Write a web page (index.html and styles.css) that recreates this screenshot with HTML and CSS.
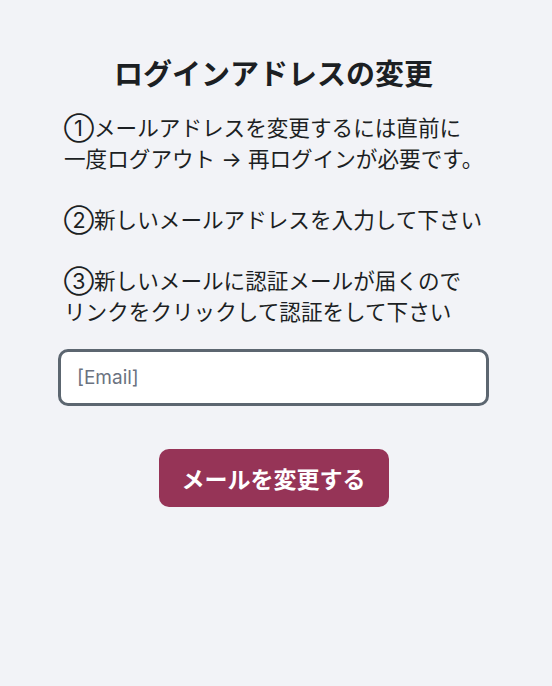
FILE: index.html
```html
<!DOCTYPE html>
<html lang="ja">
<head>
  <meta charset="UTF-8">
  <title>ログインアドレスの変更</title>
  <link rel="stylesheet" href="styles.css">
</head>
<body>
  <div class="panel">
    <h1>ログインアドレスの変更</h1>
    <div class="notes">
      <p>①メールアドレスを変更するには直前に<br>一度ログアウト → 再ログインが必要です。</p>
      <p>②新しいメールアドレスを入力して下さい</p>
      <p>③新しいメールに認証メールが届くので<br>リンクをクリックして認証をして下さい</p>
    </div>
    <input type="email" id="email" placeholder="[Email]">
    <button id="change-button">メールを変更する</button>
  </div>
</body>
</html>
```

FILE: styles.css
```css
:root {
  --bg: #f2f3f7;
  --text: #1c1f23;
  --accent: #963457;
  --border: #5c6670;
}

body {
  font-family: Inter, "Noto Sans CJK JP", sans-serif;
  background-color: var(--bg);
  color: var(--text);
  margin: 0;
}

.panel {
  width: 431px;
  margin: 0 0 0 58px;
  padding-top: 53px;
  display: flex;
  flex-direction: column;
  align-items: center;
}

h1 {
  font-size: 29px;
  font-weight: bold;
  line-height: 44px;
  margin: 0 0 16px;
  text-align: center;
}

.notes {
  align-self: stretch;
  padding-left: 6px;
  font-size: 21.6px;
  line-height: 30.7px;
  white-space: nowrap;
}

.notes p {
  margin: 0 0 30.7px;
}

.notes p:last-child {
  margin-bottom: 0;
}

#email {
  box-sizing: border-box;
  align-self: stretch;
  height: 57px;
  margin-top: 21px;
  padding: 0 16px;
  font-family: inherit;
  font-size: 19px;
  border: 3px solid var(--border);
  border-radius: 10px;
  background: #fff;
  color: var(--text);
}

#email::placeholder {
  color: #6b7280;
}

#change-button {
  margin-top: 43px;
  width: 230px;
  height: 58px;
  background: var(--accent);
  color: #fff;
  border: none;
  border-radius: 10px;
  font-family: inherit;
  font-size: 23px;
  font-weight: bold;
  cursor: pointer;
}
```
